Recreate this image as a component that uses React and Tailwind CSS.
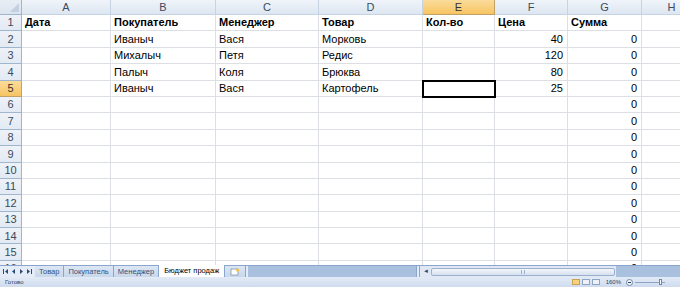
import React from 'react';

const cols = [
    { key: 'A', w: 89 },
    { key: 'B', w: 105 },
    { key: 'C', w: 103 },
    { key: 'D', w: 104 },
    { key: 'E', w: 72 },
    { key: 'F', w: 73 },
    { key: 'G', w: 74 },
    { key: 'H', w: 60 },
];

// строки листа: [A, B, C, D, E, F, G]
const rows = [
    ['Дата', 'Покупатель', 'Менеджер', 'Товар', 'Кол-во', 'Цена', 'Сумма'],
    ['', 'Иваныч', 'Вася', 'Морковь', '', '40', '0'],
    ['', 'Михалыч', 'Петя', 'Редис', '', '120', '0'],
    ['', 'Палыч', 'Коля', 'Брюква', '', '80', '0'],
    ['', 'Иваныч', 'Вася', 'Картофель', '', '25', '0'],
];

function cellValue(r, c) {
    if (r < rows.length) return rows[r][c] ?? '';
    if (c === 6) return '0';
    return '';
}

export default function App() {
    const allRows = Array.from({ length: 16 }, (_, i) => i);

    return (
        <div className="w-[680px] h-[287px] flex flex-col overflow-hidden bg-white" style={{ fontFamily: '"Liberation Sans", Arial, sans-serif' }}>
            {/* сетка */}
            <div className="flex-1 overflow-hidden">
                {/* заголовки столбцов */}
                <div className="flex h-[15px]">
                    <div className="w-[22px] shrink-0 bg-gradient-to-b from-[#e9eef6] to-[#dbe4ef] border-r border-b border-[#9eb6ce] relative overflow-hidden">
                        <div className="absolute right-[2px] bottom-[2px] w-0 h-0 border-l-[9px] border-l-transparent border-b-[9px] border-b-[#c3d0e0]" />
                    </div>
                    {cols.map(col => (
                        <div key={col.key} style={{ width: col.w }}
                            className={`shrink-0 flex items-center justify-center text-[11px] border-r border-b ${col.key === 'E' ? 'bg-gradient-to-b from-[#fbdc9a] to-[#f6c461] border-[#c2a166] text-[#333]' : 'bg-gradient-to-b from-[#f0f4fa] to-[#dde6f1] border-[#c6d3e2] text-[#3b4a5c]'}`}>
                            {col.key}
                        </div>
                    ))}
                </div>
                {allRows.map(r => (
                    <div key={r} className="flex h-[16.4px]">
                        <div className={`w-[22px] shrink-0 flex items-center justify-center text-[11px] border-r border-b ${r === 4 ? 'bg-gradient-to-b from-[#fbdc9a] to-[#f6c461] border-[#c2a166] text-[#333]' : 'bg-gradient-to-b from-[#eef2f8] to-[#e3eaf3] border-[#9eb6ce] text-[#3b4a5c]'}`}>
                            {r + 1}
                        </div>
                        {cols.map((col, c) => {
                            const v = cellValue(r, c);
                            const num = c === 5 || c === 6;
                            const selected = r === 4 && c === 4;
                            return (
                                <div key={col.key} style={{ width: col.w }}
                                    className={`shrink-0 flex items-center text-[11px] text-black border-r border-b border-[#dcdfe3] overflow-hidden whitespace-nowrap ${num && r > 0 ? 'justify-end pr-[4px]' : 'pl-[3px]'} ${r === 0 ? 'font-bold' : ''} ${selected ? 'outline-2 outline-black -outline-offset-1 relative' : ''}`}>
                                    {v}
                                </div>
                            );
                        })}
                    </div>
                ))}
            </div>

            {/* ярлыки листов */}
            <div className="h-[12px] flex items-stretch bg-[#a9c0de] border-t border-[#8aa6cc] shrink-0">
                <div className="w-[35px] flex items-center justify-center bg-[#e4ecf7]">
                    <svg width="32" height="7" viewBox="0 0 32 7" fill="#2f4a72">
                        <rect x="1" y="1" width="1" height="5" />
                        <polygon points="6,1 6,6 3,3.5" />
                        <polygon points="13,1 13,6 10,3.5" />
                        <polygon points="18,1 18,6 21,3.5" />
                        <polygon points="25,1 25,6 28,3.5" />
                        <rect x="29" y="1" width="1" height="5" />
                    </svg>
                </div>
                <div className="flex items-stretch bg-[#e4ecf7] pr-[2px]">
                    {['Товар', 'Покупатель', 'Менеджер'].map(t => (
                        <div key={t} className="flex items-center px-[4px] text-[7.5px] text-[#34507a] border-r border-[#8aa6cc] bg-gradient-to-b from-[#dde7f4] to-[#c8d7eb]">
                            {t}
                        </div>
                    ))}
                    <div className="flex items-center px-[5px] text-[7.5px] text-black bg-white border-r border-[#8aa6cc] -mt-px">
                        Бюджет продаж
                    </div>
                    <div className="flex items-center px-[5px] bg-gradient-to-b from-[#dde7f4] to-[#c8d7eb] border-r border-[#8aa6cc]">
                        <svg width="10" height="8" viewBox="0 0 10 8">
                            <rect x="1" y="1" width="7" height="6" fill="#fff" stroke="#7f94b3" strokeWidth="0.8" />
                            <circle cx="7.5" cy="2" r="1.6" fill="#f4c343" />
                        </svg>
                    </div>
                </div>
                <div className="flex-1" />
                <div className="w-[4px] bg-[#e4ecf7] border-x border-[#8aa6cc]" />
                <div className="w-[196px] flex items-center bg-[#dfe8f4] px-[1px]">
                    <span className="text-[6px] text-[#2f4a72] px-[2px]">◄</span>
                    <div className="flex-1 h-[8px] rounded-[2px] bg-gradient-to-b from-[#f4f7fb] to-[#d5e0ee] border border-[#9bb1cf] flex items-center justify-center">
                        <div className="w-[4px] h-[4px] border-x border-[#9bb1cf]" />
                    </div>
                </div>
                <div className="w-[64px]" />
            </div>

            {/* строка состояния */}
            <div className="h-[10px] shrink-0 flex items-center bg-gradient-to-b from-[#e2ebf6] to-[#cfdcee] px-[5px] text-[6px] text-[#2a3e5c]">
                <span>Готово</span>
                <div className="flex-1" />
                <div className="flex items-center gap-[2px] mr-[6px]">
                    <div className="w-[8px] h-[6px] bg-[#f6d27a] border border-[#c9a34f]" />
                    <div className="w-[8px] h-[6px] bg-[#eef2f8] border border-[#8ea5c6]" />
                    <div className="w-[8px] h-[6px] bg-[#eef2f8] border border-[#8ea5c6]" />
                </div>
                <span className="mr-[5px]">160%</span>
                <div className="w-[7px] h-[7px] rounded-full bg-[#f4f7fb] border border-[#6f88ad] flex items-center justify-center">
                    <div className="w-[3px] h-px bg-[#2a3e5c]" />
                </div>
                <div className="w-[30px] h-px bg-[#8ea5c6] mx-[2px] relative">
                    <div className="absolute left-[24px] -top-[3px] w-[3px] h-[6px] bg-[#f4f7fb] border border-[#6f88ad]" />
                </div>
                <div className="w-[8px]" />
            </div>
        </div>
    );
}
